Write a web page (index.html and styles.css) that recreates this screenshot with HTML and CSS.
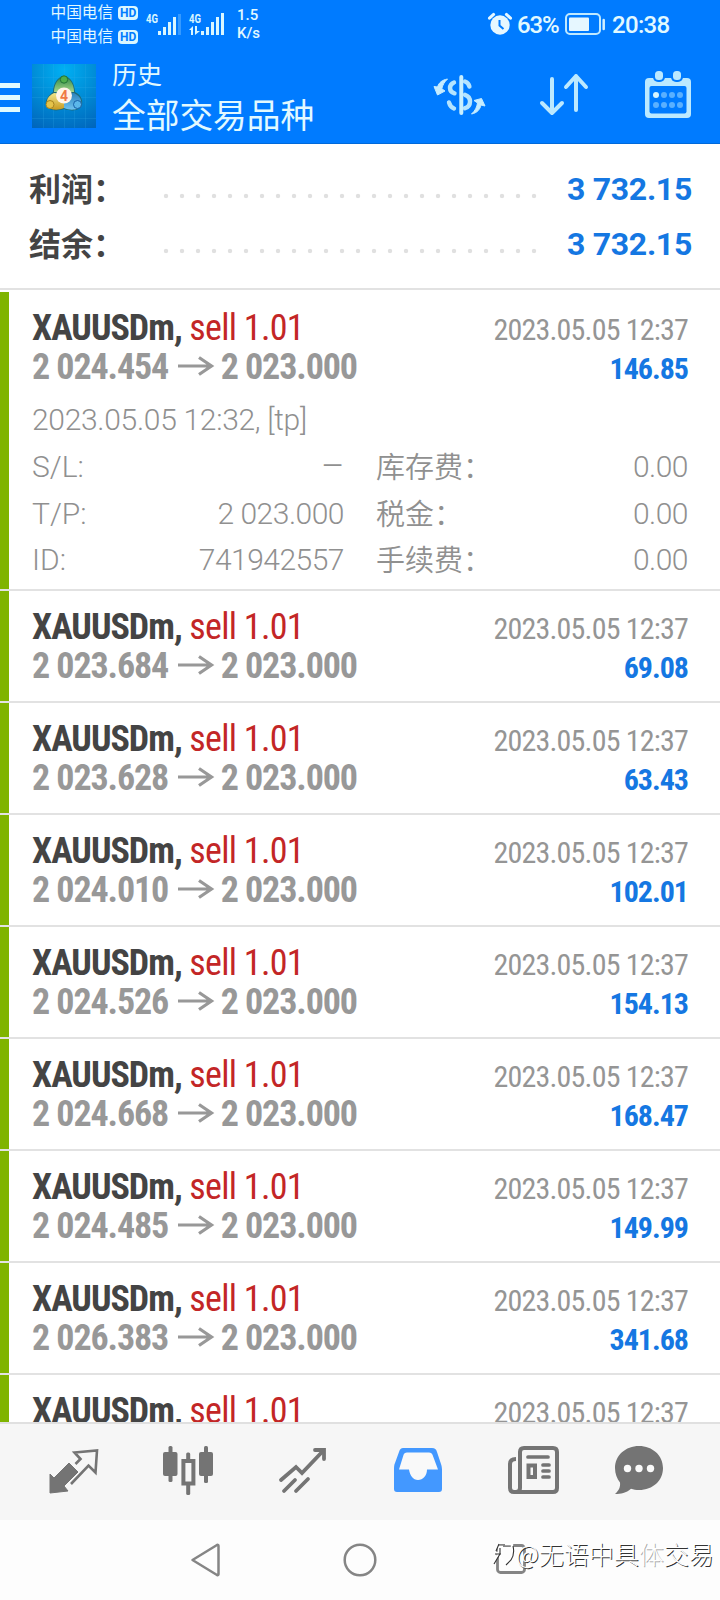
FILE: index.html
```html
<!DOCTYPE html>
<html lang="zh-CN">
<head>
<meta charset="utf-8">
<title>历史</title>
<link rel="stylesheet" href="styles.css">
</head>
<body>
<div class="phone">
  <header class="header">
    <div class="status">
      <div class="carriers">
        <div class="carrier">中国电信<span class="hd">HD</span></div>
        <div class="carrier">中国电信<span class="hd">HD</span></div>
      </div>
      <svg class="signals" width="80" height="26" viewBox="0 0 80 26">
        <g fill="#d9f6ff">
          <text class="net" x="0" y="12" textLength="12" lengthAdjust="spacingAndGlyphs">4G</text>
          <rect x="12" y="20" width="3" height="4"/><rect x="17" y="16" width="3" height="8"/><rect x="22" y="11" width="3" height="13"/><rect x="27" y="6" width="3" height="18"/>
          <rect x="32" y="3" width="3" height="21" opacity=".25"/>
          <text class="net" x="43" y="12" textLength="12" lengthAdjust="spacingAndGlyphs">4G</text>
          <path d="M43 19l4-4v9h-2v-5zM49 15h2v5h3l-5 4z"/>
          <rect x="55" y="20" width="3" height="4"/><rect x="60" y="16" width="3" height="8"/><rect x="65" y="11" width="3" height="13"/><rect x="70" y="6" width="3" height="18"/><rect x="75" y="2" width="3" height="22"/>
        </g>
      </svg>
      <div class="speed">1.5<br>K/s</div>
      <svg class="alarm" width="24" height="24" viewBox="0 0 24 24">
        <circle cx="12" cy="13" r="9.700" fill="#e6f7ff"/>
        <path d="M1.500 6.200L5.600 2.400M22.500 6.200l-4.100-3.800" stroke="#e6f7ff" stroke-width="3" stroke-linecap="round"/>
        <path d="M11.500 8v5.500l4 3.500" fill="none" stroke="#007bff" stroke-width="2"/>
      </svg>
      <div class="percent">63%</div>
      <svg class="battery" width="42" height="24" viewBox="0 0 42 24">
        <rect x="1" y="2" width="34" height="20" rx="4" fill="none" stroke="#bfe9ff" stroke-width="2"/>
        <rect x="4" y="5.500" width="20" height="13.500" rx="1" fill="#e6f7ff"/>
        <path d="M38.700 8v9" stroke="#d0efff" stroke-width="2.500" stroke-linecap="round"/>
      </svg>
      <div class="clock">20:38</div>
    </div>
    <div class="toolbar">
      <svg class="burger" width="20" height="30" viewBox="0 0 20 30"><path d="M0 2.500h20M0 14.500h20M0 26.500h20" stroke="#e0faff" stroke-width="5"/></svg>
      <svg class="logo" width="64" height="64" viewBox="0 0 64 64">
        <defs>
          <radialGradient id="sky" cx=".5" cy=".1" r="1"><stop offset="0" stop-color="#00b0f4"/><stop offset=".5" stop-color="#008cd6"/><stop offset="1" stop-color="#0066bc"/></radialGradient>
          <linearGradient id="green" x2="0" y2="1"><stop stop-color="#2f8a48"/><stop offset="1" stop-color="#a5d488"/></linearGradient>
          <linearGradient id="gold" x2="0" y2="1"><stop stop-color="#eee58a"/><stop offset="1" stop-color="#c99a20"/></linearGradient>
          <linearGradient id="blue" x2="0" y2="1"><stop stop-color="#2c83bd"/><stop offset="1" stop-color="#6fc2f0"/></linearGradient>
        </defs>
        <rect width="64" height="64" fill="url(#sky)"/>
        <path d="M11.500 0v64M21.500 0v64M32.500 0v64M42.500 0v64M53.500 0v64M0 13.500h64M0 23.500h64M0 33.500h64M0 54.500h64" stroke="#37b1ec" stroke-opacity=".2"/>
        <path d="M32 12c6 0 11 8 11 16 6 3 8 8 7 13-2 5-8 7-18 4-9 3-16 1-18-4-1-5 2-9 7-13 0-8 5-16 11-16z" fill="#1e6a77"/>
        <path d="M32 13c5.500 0 10 7 10 15H22c0-8 4.500-15 10-15z" fill="url(#green)"/>
        <path d="M22 29c-6 3-8 7-7 12 2 5 10 6 17 3V30z" fill="url(#gold)"/>
        <path d="M42 29c6 3 8 7 7 12-2 5-10 6-17 3V30z" fill="url(#blue)"/>
        <circle cx="32" cy="15.500" r="3.700" fill="#4fae4c" stroke="#227338"/>
        <circle cx="18" cy="40.500" r="4" fill="#e5c34a" stroke="#a98520"/>
        <circle cx="45.500" cy="40.500" r="4" fill="#5bb7ea" stroke="#1760a8"/>
        <circle cx="32" cy="31.500" r="8" fill="#fff4e8"/>
        <text class="logo-digit" x="32" y="36.500" text-anchor="middle">4</text>
      </svg>
      <div class="titles">
        <div class="title">历史</div>
        <div class="subtitle">全部交易品种</div>
      </div>
      <svg class="act-symbol" width="54" height="42" viewBox="0 0 54 42">
        <path d="M28.300 3v36" stroke="#c8efff" stroke-width="4" stroke-linecap="round"/>
        <g fill="none" stroke="#b4e4ff" stroke-width="4.400" stroke-linecap="round">
          <path d="M21 8.500c-2.500 1-4 3-4 5.500 0 2.700 1.700 4.500 4.500 5.300M16 28.500c.8 3 2.500 5 5 6"/>
          <path d="M32 7.500c2.200.8 3.800 2.500 4.400 5M32 20.800c3.500 1.200 5 3.400 5 6.700 0 3.400-1.700 5.600-5 6.700"/>
        </g>
        <path d="M14.500 5C9 6 6 8.500 4.500 13L1 12.500 4.500 21 12 17l-3.200-2.200C9.500 11 11.500 8 14.500 5zM38.500 40c5.500-1 8.500-4.500 9.500-9l4 1-3.500-7.500L41 26.500l3.500 2.500C44 33 42 37 38.500 40z" fill="#c5ecff" stroke="#c5ecff" stroke-linejoin="round"/>
      </svg>
      <svg class="act-sort" width="50" height="44" viewBox="0 0 50 44">
        <path d="M13 6v34M3 30l10 10 10-10M37 37V3M27 14L37 3l10 11" fill="none" stroke="#bce9ff" stroke-width="4" stroke-linecap="round" stroke-linejoin="round"/>
      </svg>
      <svg class="act-cal" width="46" height="48" viewBox="0 0 46 48">
        <rect y="8" width="46" height="40" rx="4" fill="#bce9ff"/>
        <rect x="4.500" y="16" width="37" height="27.500" rx="2" fill="#007bff"/>
        <rect x="8" y="-1" width="12" height="13" rx="5" fill="#007bff"/><rect x="26" y="-1" width="12" height="13" rx="5" fill="#007bff"/>
        <rect x="10" y="1" width="8" height="9" rx="3.500" fill="#bce9ff"/><rect x="28" y="1" width="8" height="9" rx="3.500" fill="#bce9ff"/>
        <circle cx="11" cy="25" r="3" fill="#d8f5ff"/>
        <g fill="#5ab0ff"><circle cx="19" cy="25" r="3"/><circle cx="27" cy="25" r="3"/><circle cx="35" cy="25" r="3"/><circle cx="11" cy="35" r="3"/><circle cx="19" cy="35" r="3"/><circle cx="27" cy="35" r="3"/><circle cx="35" cy="35" r="3"/></g>
      </svg>
    </div>
  </header>

  <section class="summary">
    <div class="sum-line"><span class="sum-label">利润：</span><span class="dots"></span><span class="sum-value">3 732.15</span></div>
    <div class="sum-line"><span class="sum-label">结余：</span><span class="dots"></span><span class="sum-value">3 732.15</span></div>
  </section>

  <main class="deals">
    <article class="deal open">
      <div class="line"><span class="name"><b>XAUUSDm,</b> <i>sell 1.01</i></span><span class="date">2023.05.05 12:37</span></div>
      <div class="line"><span class="price">2 024.454 <svg class="arrow" width="36" height="20" viewBox="0 0 36 20"><path d="M0 10h33M21 1.500L33.500 10 21 18.500"/></svg> 2 023.000</span><span class="profit">146.85</span></div>
      <div class="opened">2023.05.05 12:32, [tp]</div>
      <div class="details">
        <span>S/L:</span><span class="num dash">–</span><span class="cjk">库存费：</span><span class="num">0.00</span>
        <span>T/P:</span><span class="num">2 023.000</span><span class="cjk">税金：</span><span class="num">0.00</span>
        <span>ID:</span><span class="num">741942557</span><span class="cjk">手续费：</span><span class="num">0.00</span>
      </div>
    </article>
    <article class="deal">
      <div class="line"><span class="name"><b>XAUUSDm,</b> <i>sell 1.01</i></span><span class="date">2023.05.05 12:37</span></div>
      <div class="line"><span class="price">2 023.684 <svg class="arrow" width="36" height="20" viewBox="0 0 36 20"><path d="M0 10h33M21 1.500L33.500 10 21 18.500"/></svg> 2 023.000</span><span class="profit">69.08</span></div>
    </article>
    <article class="deal">
      <div class="line"><span class="name"><b>XAUUSDm,</b> <i>sell 1.01</i></span><span class="date">2023.05.05 12:37</span></div>
      <div class="line"><span class="price">2 023.628 <svg class="arrow" width="36" height="20" viewBox="0 0 36 20"><path d="M0 10h33M21 1.500L33.500 10 21 18.500"/></svg> 2 023.000</span><span class="profit">63.43</span></div>
    </article>
    <article class="deal">
      <div class="line"><span class="name"><b>XAUUSDm,</b> <i>sell 1.01</i></span><span class="date">2023.05.05 12:37</span></div>
      <div class="line"><span class="price">2 024.010 <svg class="arrow" width="36" height="20" viewBox="0 0 36 20"><path d="M0 10h33M21 1.500L33.500 10 21 18.500"/></svg> 2 023.000</span><span class="profit">102.01</span></div>
    </article>
    <article class="deal">
      <div class="line"><span class="name"><b>XAUUSDm,</b> <i>sell 1.01</i></span><span class="date">2023.05.05 12:37</span></div>
      <div class="line"><span class="price">2 024.526 <svg class="arrow" width="36" height="20" viewBox="0 0 36 20"><path d="M0 10h33M21 1.500L33.500 10 21 18.500"/></svg> 2 023.000</span><span class="profit">154.13</span></div>
    </article>
    <article class="deal">
      <div class="line"><span class="name"><b>XAUUSDm,</b> <i>sell 1.01</i></span><span class="date">2023.05.05 12:37</span></div>
      <div class="line"><span class="price">2 024.668 <svg class="arrow" width="36" height="20" viewBox="0 0 36 20"><path d="M0 10h33M21 1.500L33.500 10 21 18.500"/></svg> 2 023.000</span><span class="profit">168.47</span></div>
    </article>
    <article class="deal">
      <div class="line"><span class="name"><b>XAUUSDm,</b> <i>sell 1.01</i></span><span class="date">2023.05.05 12:37</span></div>
      <div class="line"><span class="price">2 024.485 <svg class="arrow" width="36" height="20" viewBox="0 0 36 20"><path d="M0 10h33M21 1.500L33.500 10 21 18.500"/></svg> 2 023.000</span><span class="profit">149.99</span></div>
    </article>
    <article class="deal">
      <div class="line"><span class="name"><b>XAUUSDm,</b> <i>sell 1.01</i></span><span class="date">2023.05.05 12:37</span></div>
      <div class="line"><span class="price">2 026.383 <svg class="arrow" width="36" height="20" viewBox="0 0 36 20"><path d="M0 10h33M21 1.500L33.500 10 21 18.500"/></svg> 2 023.000</span><span class="profit">341.68</span></div>
    </article>
    <article class="deal">
      <div class="line"><span class="name"><b>XAUUSDm,</b> <i>sell 1.01</i></span><span class="date">2023.05.05 12:37</span></div>
    </article>
  </main>

  <nav class="tabs">
    <svg class="t-quotes" width="50" height="50" viewBox="0 0 50 50">
      <path d="M1 28l4 4L20 17l9 9-14 14 4 5-18 2z" fill="#747474" stroke="#747474" stroke-linejoin="round"/>
      <path d="M26.500 18l5-5-6-6.500 22.500-2-1.500 22-7-7L22 38" fill="none" stroke="#747474" stroke-width="2.600"/>
    </svg>
    <svg class="t-chart" width="50" height="50" viewBox="0 0 50 50">
      <g fill="#747474"><rect y="6" width="14.500" height="24" rx="2"/><rect x="5.500" y="0" width="4" height="36" rx="1.500"/><rect x="36" y="6" width="14" height="24" rx="2"/><rect x="41" y="0" width="4" height="37" rx="1.500"/><rect x="23.200" y="6.500" width="4" height="9" rx="1.500"/><rect x="23.200" y="37" width="4" height="12" rx="1.500"/></g>
      <rect x="20.400" y="15" width="10" height="22.500" fill="none" stroke="#747474" stroke-width="4"/>
    </svg>
    <svg class="t-trade" width="50" height="50" viewBox="0 0 50 50">
      <g fill="none" stroke="#747474" stroke-width="3.800" stroke-linecap="round"><path d="M4 34l15-13 6 6L46 5"/><path d="M38 4h9v9"/><path d="M7 45l11-11M19 45l12-12"/></g>
    </svg>
    <svg class="t-history" width="50" height="50" viewBox="0 0 50 50">
      <path d="M10 2h29c3 0 4 1 5 4l4 12c1 3 1 5 1 7v18c0 2-1 3-3 3H4c-2 0-3-1-3-3V24c0-3 0-5 1-7L6 6c1-3 2-4 4-4z" fill="#4398ff"/>
      <path d="M14 6.500h22c2 0 3 1 3.600 2.500L45 23.500h-11c0 6-4 10.500-9 10.500s-8-4.500-9-10.500H6L10.500 9C11 7.500 12 6.500 14 6.500z" fill="#f9f9f9"/>
    </svg>
    <svg class="t-news" width="52" height="50" viewBox="0 0 52 50">
      <path d="M9 46h37q4 0 4-4V6q0-4-4-4H17q-4 0-4 4v36q0 4-4 4H7q-4 0-4-4V18q0-5 6-5" fill="none" stroke="#747474" stroke-width="4"/>
      <path d="M21 11h20M36 19h6M36 25h6M36 31h6" stroke="#747474" stroke-width="3.700" stroke-linecap="round"/>
      <rect x="21.500" y="19.500" width="6.500" height="11.500" fill="none" stroke="#747474" stroke-width="4"/>
    </svg>
    <svg class="t-chat" width="50" height="50" viewBox="0 0 50 50">
      <path d="M25 0c13.500 0 24 9.500 24 22S39 44 25 44c-3 0-5.500-.4-8-1.300C12 47 7 48 1 48c4-3.500 5.500-7 5-11.500C3 32.500 1 28 1 22 1 9.500 11.500 0 25 0z" fill="#747474"/>
      <g fill="#fafafa"><circle cx="13.500" cy="22.500" r="3.700"/><circle cx="25" cy="22.500" r="3.700"/><circle cx="36.500" cy="22.500" r="3.700"/></g>
    </svg>
  </nav>

  <footer class="sysnav">
    <svg width="30" height="34" viewBox="0 0 30 34"><path d="M1.500 17L26 2q1.500-.5 1.500 1v28q0 1.500-1.500 1z" fill="none" stroke="#858585" stroke-width="2.500" stroke-linejoin="round"/></svg>
    <svg width="34" height="34" viewBox="0 0 34 34"><circle cx="17" cy="17" r="15.300" fill="none" stroke="#858585" stroke-width="2.500"/></svg>
    <svg class="recent" width="32" height="32" viewBox="0 0 32 32"><rect x="2.500" y="2.500" width="27" height="27" rx="3" fill="none" stroke="#858585" stroke-width="2.800"/></svg>
    <div class="watermark"><svg width="25" height="28" viewBox="0 0 25 28"><g fill="none" stroke-width="2.400" stroke="#fff"><path d="M7 4L4 11M6 8h6M8 8v6M3 14h9M8 14L2 24M9 17l3 5M14 5h7v16h-3l-4 4"/></g><path d="M8 5L5 12M9 9v6M9 15L3 25M4 15h6M22 7q2 8-2 14l-5 5" fill="none" stroke="#333" stroke-width="1.100"/></svg>@无语中具<span class="faint">体</span>交易</div>
  </footer>
</div>
</body>
</html>
```

FILE: styles.css
```css
body {
  margin: 0;
  background: #fdfdfd;
  font-family: Roboto, "Noto Sans CJK SC", sans-serif;
}

.phone {
  position: relative;
  display: flex;
  flex-direction: column;
  width: 720px;
  height: 1600px;
  overflow: hidden;
}

.phone svg { display: block; flex: none; overflow: visible; }

.header {
  height: 144px;
  flex: none;
  box-sizing: border-box;
  background: #007bff;
  border-bottom: 1px solid #0069da;
  color: #e2f9ff;
}

.status { display: flex; height: 50px; align-items: flex-start; }
.carriers { margin-left: 50.5px; width: 95.5px; padding-top: 1px; }
.carrier { display: flex; align-items: center; height: 24px; font-size: 15.7px; line-height: 24px; }
.hd {
  margin-left: 5px;
  width: 20px;
  height: 14px;
  border-radius: 4px;
  background: #d9f6ff;
  color: #007bff;
  font: bold 12px/14px Roboto, sans-serif;
  text-align: center;
}
.signals { margin-top: 11px; }
.net { font: bold 12px Roboto, sans-serif; }
.speed { margin: 6px 0 0 11px; width: 45px; font-size: 15px; font-weight: 500; line-height: 18px; }
.alarm { margin: 12px 0 0 auto; }
.percent { margin-left: 5px; padding-top: 12px; width: 48px; font-size: 24px; font-weight: 500; line-height: 26px; letter-spacing: -1.2px; }
.battery { margin-top: 12px; }
.clock { margin: 12px 50px 0 5px; width: 58px; font-size: 24px; font-weight: 500; line-height: 26px; letter-spacing: -.7px; }

.toolbar { display: flex; align-items: flex-start; height: 93px; }
.burger { margin-top: 33px; }
.logo { margin: 14px 0 0 12px; }
.logo-digit { font: bold 14px Roboto, sans-serif; fill: #ef7a45; }
.titles { margin-left: 16px; width: 321px; }
.title { height: 42px; padding-top: 6px; box-sizing: border-box; font-size: 25px; line-height: 40px; }
.subtitle { font-size: 33.7px; line-height: 50px; }
.act-symbol { margin-top: 24px; }
.act-sort { margin: 23px 0 0 52px; }
.act-cal { margin: 20px 0 0 56px; }

.summary { height: 144px; flex: none; box-sizing: border-box; padding: 17px 28px 0 29px; background: #fff; }
.sum-line { display: flex; align-items: flex-start; height: 55px; }
.sum-label { width: 133px; color: #444; font: bold 32px/53px "Noto Sans CJK SC", sans-serif; }
.dots {
  width: 376px;
  height: 16px;
  margin-top: 29px;
  background: radial-gradient(circle at 4px 6px, #e0e0e0 1.8px, transparent 2.6px) 0 0 / 16px 16px;
}
.sum-value { margin-left: auto; color: #1577e2; font-size: 32px; font-weight: 700; line-height: 56px; letter-spacing: -.3px; }

.deals { height: 1134px; flex: none; overflow: hidden; background: #fff; }
.deal {
  display: flow-root;
  box-sizing: border-box;
  height: 112px;
  padding: 17px 32px 0;
  border-top: 2px solid #e2e2e2;
  background: linear-gradient(#7fb400, #7fb400) left top / 9px 100% no-repeat;
  background-clip: padding-box;
}
.deal.open { height: 301px; padding-top: 19px; background-position: 0 2px; }
.line { display: flex; justify-content: space-between; align-items: baseline; height: 39px; line-height: 39px; }
.name, .price, .date, .profit { font-family: "Roboto Condensed", Roboto, sans-serif; font-stretch: 75%; white-space: nowrap; }
.name { font-size: 36px; color: #444; letter-spacing: -.7px; }
.name b { letter-spacing: -1px; }
.name i { font-style: normal; color: #c32626; }
.price { display: inline-flex; align-items: center; gap: 8.5px; font-size: 36px; font-weight: 700; color: #989898; letter-spacing: -1.1px; }
.arrow { margin: -4px -1.5px 0 1px; }
.arrow path { fill: none; stroke: #989898; stroke-width: 3.2; }
.date { font-size: 30px; color: #959595; letter-spacing: -.8px; }
.profit { font-size: 30px; font-weight: 700; color: #1577e2; letter-spacing: -1px; }
.opened { margin-top: 8px; height: 48px; font-size: 30px; font-weight: 350; line-height: 50px; color: #909090; letter-spacing: -.3px; }
.details {
  display: grid;
  grid-template-columns: 90px 222px 180px 1fr;
  grid-auto-rows: 46.7px;
  font-size: 30px;
  font-weight: 350;
  line-height: 47px;
  color: #909090;
}
.num { text-align: right; letter-spacing: -.5px; }
.dash { font-size: 36px; }
.cjk { padding-left: 32px; font-family: "Noto Sans CJK SC", sans-serif; font-size: 29px; line-height: 44px; }

.tabs {
  display: flex;
  height: 98px;
  flex: none;
  box-sizing: border-box;
  padding: 22px 0 0 49px;
  border-top: 2px solid #e0e0e0;
  background: #f6f6f6;
}
.t-chart, .t-trade { margin-left: 64px; }
.t-history { margin-left: 66px; }
.t-news { margin-left: 63.5px; }
.t-chat { margin-left: 55px; }

.sysnav { position: relative; display: flex; gap: 122px; height: 80px; padding: 23px 0 0 191px; }
.recent { margin-left: -4px; }
.watermark {
  position: absolute;
  left: 491px;
  top: 19px;
  display: flex;
  color: #fff;
  font: 300 25px/28px "Noto Sans CJK SC", sans-serif;
  text-shadow: 1px 1px 0 #333;
  white-space: nowrap;
}
.faint { text-shadow: 1px 1px 0 #aaa; }
```
